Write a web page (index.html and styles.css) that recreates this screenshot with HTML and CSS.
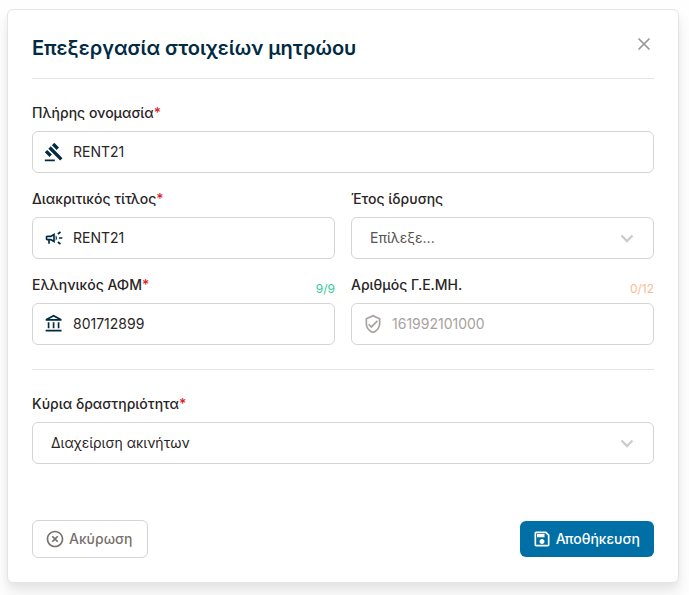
FILE: index.html
```html
<!DOCTYPE html>
<html lang="el">
<head>
  <meta charset="UTF-8" />
  <meta name="viewport" content="width=device-width, initial-scale=1.0"/>
  <title>Επεξεργασία στοιχείων μητρώου</title>
  <link rel="stylesheet" href="styles.css">
</head>
<body>
  <div class="modal" role="dialog" aria-labelledby="modal-title">
    <header class="modal-header">
      <h1 id="modal-title">Επεξεργασία στοιχείων μητρώου</h1>
      <button type="button" class="close-btn" aria-label="Κλείσιμο">
        <svg viewBox="0 0 20 20" width="20" height="20" fill="none" stroke="currentColor" stroke-width="1.7"><path d="M4.5 4.500l11 11M15.500 4.500l-11 11"/></svg>
      </button>
    </header>

    <form>
      <div class="form-grid">
        <div class="field full">
          <div class="label-row">
            <label for="fullName">Πλήρης ονομασία<span class="required">*</span></label>
          </div>
          <div class="control">
            <svg class="icon" viewBox="0 0 24 24"><path d="M1 21h12v2H1zM5.245 8.07l2.83-2.827 14.14 14.142-2.828 2.828zM12.317 1l5.657 5.656-2.83 2.83-5.654-5.66zM3.825 9.485l5.657 5.657-2.828 2.828-5.657-5.657z"/></svg>
            <input type="text" id="fullName" value="RENT21" />
          </div>
        </div>

        <div class="field">
          <div class="label-row">
            <label for="tradeName">Διακριτικός τίτλος<span class="required">*</span></label>
          </div>
          <div class="control">
            <svg class="icon" viewBox="0 0 24 24"><path d="M18 11v2h4v-2h-4zm-2 6.61c.96.71 2.21 1.65 3.2 2.39.4-.53.8-1.07 1.2-1.6-.99-.74-2.24-1.68-3.2-2.4-.4.54-.8 1.08-1.2 1.61zM20.4 5.6c-.4-.53-.8-1.07-1.2-1.6-.99.74-2.24 1.68-3.2 2.4.4.53.8 1.07 1.2 1.6.96-.72 2.21-1.65 3.2-2.4zM4 9c-1.1 0-2 .9-2 2v2c0 1.1.9 2 2 2h1v4h2v-4h1l5 3V6L8 9H4zm5.03 1.71L11 9.53v4.94l-1.97-1.18-.48-.29H4v-2h4.55l.48-.29zM15.5 12c0-1.33-.58-2.53-1.5-3.35v6.69c.92-.81 1.5-2.01 1.5-3.34z"/></svg>
            <input type="text" id="tradeName" value="RENT21" />
          </div>
        </div>

        <div class="field">
          <div class="label-row">
            <label for="year">Έτος ίδρυσης</label>
          </div>
          <div class="control">
            <select id="year" class="placeholder">
              <option value="">Επίλεξε...</option>
            </select>
            <svg class="chevron" viewBox="0 0 20 20"><path d="M4.5 7.5l5.500 5.500 5.500-5.500"/></svg>
          </div>
        </div>

        <div class="field">
          <div class="label-row">
            <label for="afm">Ελληνικός ΑΦΜ<span class="required">*</span></label>
            <span class="counter complete">9/9</span>
          </div>
          <div class="control">
            <svg class="icon" viewBox="0 0 24 24"><path d="M6.5 10h-2v7h2v-7zm6 0h-2v7h2v-7zm8.5 9H2v2h19v-2zm-2.5-9h-2v7h2v-7zm-7-6.74L16.71 6H6.29l5.21-2.74m0-2.26L2 6v2h19V6l-9.5-5z"/></svg>
            <input type="text" id="afm" value="801712899" maxlength="9" />
          </div>
        </div>

        <div class="field">
          <div class="label-row">
            <label for="gemi">Αριθμός Γ.Ε.ΜΗ.</label>
            <span class="counter">0/12</span>
          </div>
          <div class="control">
            <svg class="icon muted" viewBox="0 0 24 24"><path d="M12 1L3 5v6c0 5.55 3.84 10.74 9 12 5.16-1.26 9-6.45 9-12V5l-9-4zm7 10c0 4.52-2.98 8.69-7 9.93-4.02-1.24-7-5.41-7-9.93V6.3l7-3.11 7 3.11V11zm-11.59.59L6 13l4 4 8-8-1.41-1.42L10 14.17z"/></svg>
            <input type="text" id="gemi" placeholder="161992101000" maxlength="12" />
          </div>
        </div>
      </div>

      <div class="activity">
        <div class="field">
          <div class="label-row">
            <label for="activity">Κύρια δραστηριότητα<span class="required">*</span></label>
          </div>
          <div class="control">
            <select id="activity">
              <option>Διαχείριση ακινήτων</option>
            </select>
            <svg class="chevron" viewBox="0 0 20 20"><path d="M4.5 7.5l5.500 5.500 5.500-5.500"/></svg>
          </div>
        </div>
      </div>

      <div class="actions">
        <button type="button" class="btn cancel-btn">
          <svg viewBox="0 0 24 24"><path d="M14.59 8L12 10.59 9.41 8 8 9.41 10.59 12 8 14.59 9.41 16 12 13.41 14.59 16 16 14.59 13.41 12 16 9.41 14.59 8zM12 2C6.47 2 2 6.47 2 12s4.47 10 10 10 10-4.47 10-10S17.53 2 12 2zm0 18c-4.41 0-8-3.59-8-8s3.59-8 8-8 8 3.59 8 8-3.59 8-8 8z"/></svg>
          Ακύρωση
        </button>
        <button type="submit" class="btn save-btn">
          <svg viewBox="0 0 24 24"><path d="M17 3H5c-1.11 0-2 .9-2 2v14c0 1.1.89 2 2 2h14c1.1 0 2-.9 2-2V7l-4-4zm2 16H5V5h11.17L19 7.83V19zm-7-7c-1.66 0-3 1.34-3 3s1.34 3 3 3 3-1.34 3-3-1.34-3-3-3zM6 6h9v4H6z"/></svg>
          Αποθήκευση
        </button>
      </div>
    </form>
  </div>
</body>
</html>
```
FILE: styles.css
```css
* {
  margin: 0;
  padding: 0;
  box-sizing: border-box;
}

body {
  font-family: 'Inter', sans-serif;
  font-size: 14px;
  line-height: 20px;
  color: #292524;
  background: #fefefe;
  padding: 9px 10px 12px 7px;
}

.modal {
  max-width: 672px;
  margin: 0 auto;
  padding: 24px;
  background: #fff;
  border: 1px solid #e5e5e5;
  border-radius: 6px;
  box-shadow: 0 10px 15px rgba(0, 0, 0, 0.08), 0 4px 6px rgba(0, 0, 0, 0.04);
}

.modal-header {
  display: flex;
  justify-content: space-between;
  align-items: flex-start;
  padding-bottom: 16px;
  border-bottom: 1px solid #e5e5e5;
}

.modal-header h1 {
  font-size: 20px;
  line-height: 28px;
  font-weight: 600;
  color: #002b42;
}

.close-btn {
  display: flex;
  border: none;
  background: none;
  color: #999;
  cursor: pointer;
}

.form-grid {
  display: grid;
  grid-template-columns: 1fr 1fr;
  gap: 16px;
  padding: 24px 0;
}

.full {
  grid-column: 1 / -1;
}

.label-row {
  display: flex;
  justify-content: space-between;
  align-items: flex-end;
  margin-bottom: 8px;
}

label {
  font-weight: 500;
}

.required {
  color: #dc2626;
}

.counter {
  font-size: 12px;
  line-height: 12px;
  color: #fdba8c;
}

.counter.complete {
  color: #34c997;
}

.control {
  position: relative;
}

.control input,
.control select {
  display: block;
  width: 100%;
  height: 42px;
  border: 1px solid #d4d4d4;
  border-radius: 6px;
  background: #fff;
  font: inherit;
  color: #292524;
}

.control input {
  padding: 0 12px 2px 40px;
}

.control input::placeholder {
  color: #a8a29e;
}

.control select {
  appearance: none;
  -webkit-appearance: none;
  padding: 0 40px 0 18px;
}

.control select.placeholder {
  color: #57534e;
}

.icon {
  position: absolute;
  top: 11px;
  left: 12px;
  width: 20px;
  height: 20px;
  fill: #002b42;
}

.icon.muted {
  fill: #a8a29e;
}

.chevron {
  position: absolute;
  top: 11px;
  right: 17px;
  width: 20px;
  height: 20px;
  fill: none;
  stroke: #ccc;
  stroke-width: 2.4;
  pointer-events: none;
}

.activity {
  padding: 24px 0 56px;
  border-top: 1px solid #e5e5e5;
}

.actions {
  display: flex;
  justify-content: space-between;
  align-items: center;
}

.btn {
  display: flex;
  align-items: center;
  gap: 4px;
  height: 36px;
  padding: 0 14px 0 12px;
  border: none;
  border-radius: 6px;
  font: inherit;
  font-weight: 500;
  cursor: pointer;
}

.btn svg {
  width: 20px;
  height: 20px;
  fill: currentColor;
}

.cancel-btn {
  height: 38px;
  border: 1px solid #d4d4d4;
  background: #fff;
  color: #78716c;
}

.save-btn {
  background: #006fa6;
  color: #fff;
}

@media (max-width: 480px) {
  .form-grid {
    grid-template-columns: 1fr;
  }
}
```
